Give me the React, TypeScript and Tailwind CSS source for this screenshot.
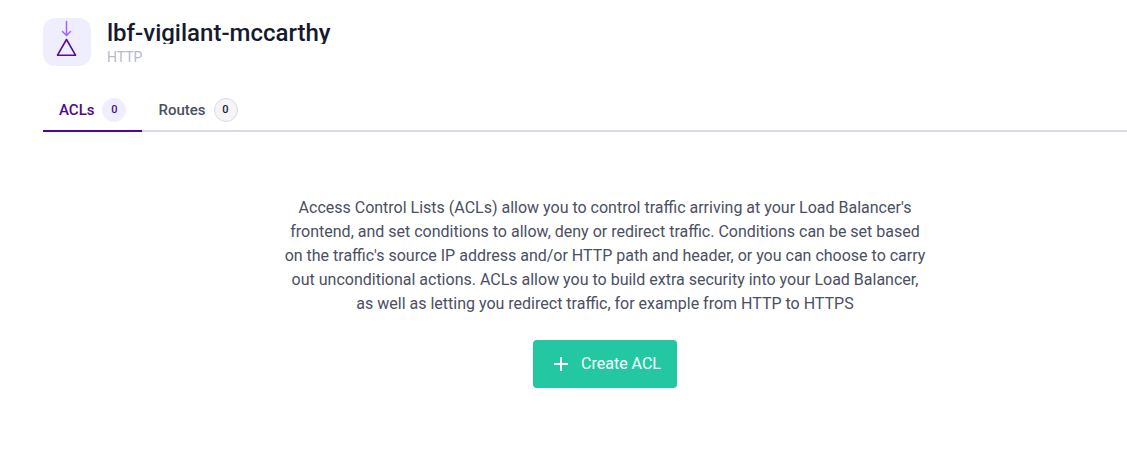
import { useState } from "react";

const tabs = [
  { id: "acls", label: "ACLs", count: 0 },
  { id: "routes", label: "Routes", count: 0 },
];

function FrontendIcon() {
  return (
    <svg
      viewBox="0 0 48 48"
      className="size-12 shrink-0 rounded-xl bg-[#eeeeff]"
      fill="none"
      strokeLinecap="round"
      strokeLinejoin="round"
      aria-hidden="true"
    >
      <path d="M23.5 3.5V17M19.5 13.5L23.5 17.5L27.5 13.5" stroke="#a365f6" strokeWidth="1.5" />
      <path d="M23.5 21.5L32.5 37.2H14.5Z" stroke="#521094" strokeWidth="1.6" />
    </svg>
  );
}

function Header() {
  return (
    <header className="flex items-start gap-4">
      <FrontendIcon />
      <div className="min-w-0">
        <h1 className="h-[26px] truncate text-2xl leading-[30px] font-medium text-[#151a2d]">
          lbf-vigilant-mccarthy
        </h1>
        <p className="mt-1 text-sm leading-[18px] text-[#b8bac9]">HTTP</p>
      </div>
    </header>
  );
}

export default function App() {
  const [active, setActive] = useState("acls");

  return (
    <main className="min-h-screen bg-white pt-[18px] pl-[43px] font-['Roboto','Noto_Sans',sans-serif] text-[#4a4f62]">
      <Header />
      <div role="tablist" className="mt-6 flex border-b-2 border-[#d8daea]">
        {tabs.map((tab) => {
          const selected = tab.id === active;
          return (
            <button
              key={tab.id}
              type="button"
              role="tab"
              aria-selected={selected}
              onClick={() => setActive(tab.id)}
              className={`-mb-0.5 flex h-[42px] items-center gap-2 border-b-2 px-4 text-[15px] leading-6 font-medium ${
                selected ? "border-[#4f0599] text-[#4f0599]" : "border-transparent"
              }`}
            >
              {tab.label}
              <span
                className={`flex size-6 items-center justify-center rounded-full border text-[11px] leading-4 ${
                  selected
                    ? "border-[#eeeeff] bg-[#eeeeff]"
                    : "border-[#d8daea] bg-[#f5f5f8] text-[#151a2d]"
                }`}
              >
                {tab.count}
              </span>
            </button>
          );
        })}
      </div>
      <section className="flex flex-col items-center gap-6 pt-16 pl-10">
        <p className="max-w-[644px] text-center text-base leading-6">
          Access Control Lists (ACLs) allow you to control traffic arriving at your Load
          Balancer's frontend, and set conditions to allow, deny or redirect traffic. Conditions
          can be set based on the traffic's source IP address and/or HTTP path and header, or you
          can choose to carry out unconditional actions. ACLs allow you to build extra security
          into your Load Balancer, as well as letting you redirect traffic, for example from HTTP
          to HTTPS
        </p>
        <button
          type="button"
          className="flex h-12 items-center gap-3 rounded bg-[#23c8a3] pr-4 pl-5 text-base leading-6 text-white"
        >
          <svg viewBox="0 0 16 16" className="size-4" fill="none" aria-hidden="true">
            <path d="M8 1V15M1 8H15" stroke="currentColor" strokeWidth="2" />
          </svg>
          Create ACL
        </button>
      </section>
    </main>
  );
}
